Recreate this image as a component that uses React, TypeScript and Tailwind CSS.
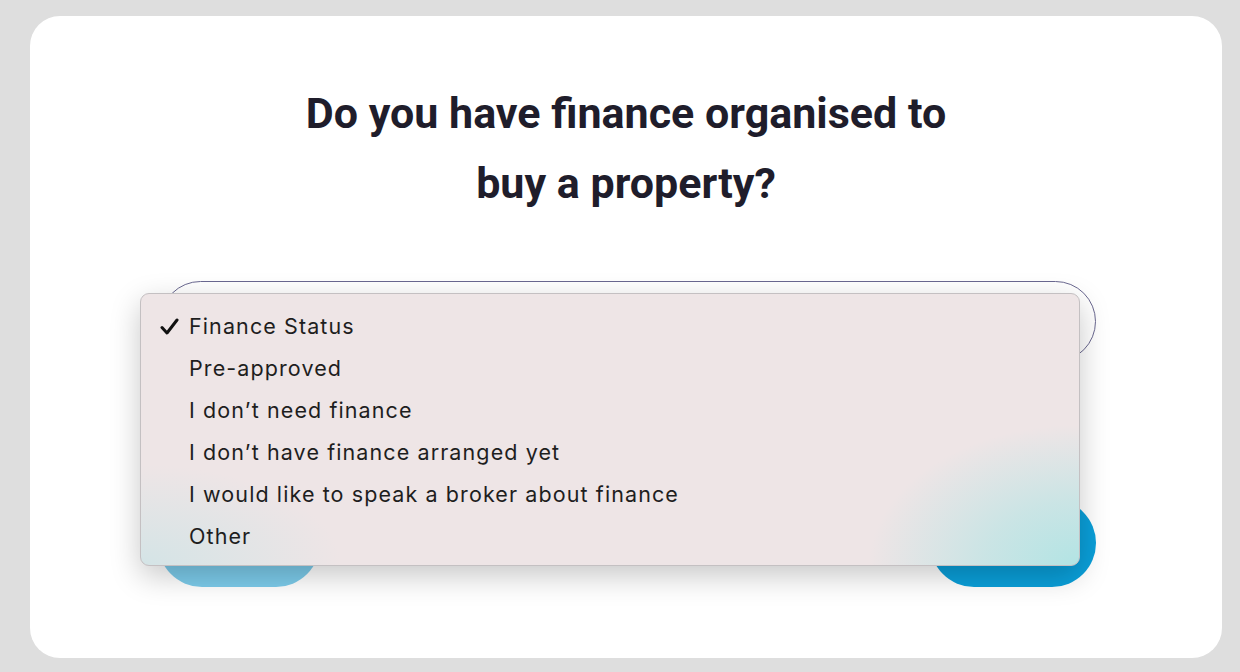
import React from "react";

const options = [
  "Finance Status",
  "Pre-approved",
  "I don’t need finance",
  "I don’t have finance arranged yet",
  "I would like to speak a broker about finance",
  "Other",
];

export default function App() {
  return (
    <div className="w-[1240px] h-[672px] bg-[#dedede] pt-[16px] pl-[30px] overflow-hidden">
      <div className="w-[1192px] h-[642px] bg-white rounded-[30px] pt-[62px] px-[128px]">
        <h1
          className="text-center text-[43px] leading-[70px] font-bold text-[#1f1d2b] tracking-[0px]"
          style={{ fontFamily: "Roboto, sans-serif" }}
        >
          Do you have finance organised to
          <br />
          buy a property?
        </h1>
        <div className="relative mt-[63px] ml-[2px] w-[936px]">
          <div className="h-[81px] rounded-full border border-[#6a6890]" />
          <div
            className="absolute left-[-20px] top-[12px] w-[940px] h-[273px] rounded-[9px] border border-[#c4c0c2] shadow-[0_10px_30px_rgba(0,0,0,0.22)] pt-[11px] overflow-hidden bg-[#eee5e6] z-10"
            style={{
              fontFamily: "Inter, 'Noto Sans', sans-serif",
              backgroundImage:
                "radial-gradient(ellipse 210px 140px at 100% 100%, rgba(178,228,228,1) 0%, rgba(178,228,228,0.6) 45%, rgba(238,229,230,0) 100%), radial-gradient(ellipse 200px 100px at 0% 100%, rgba(212,228,230,1) 0%, rgba(238,229,230,0) 100%)",
            }}
          >
            {options.map((o, i) => (
              <div key={o} className="h-[42px] flex items-center text-[21.5px] tracking-[1.1px] text-[#1e1e1e]">
                <span className="w-[48px] flex justify-end pr-[10px]">
                  {i === 0 && (
                    <svg width="19" height="17" viewBox="0 0 19 17">
                      <path d="M2 9.5 L7 15 L17 2" fill="none" stroke="#111" strokeWidth="3" strokeLinecap="round" strokeLinejoin="round" />
                    </svg>
                  )}
                </span>
                <span>{o}</span>
              </div>
            ))}
          </div>
        </div>
        <div className="mt-[137px] flex justify-between w-[938px]">
          <div className="w-[162px] h-[88px] rounded-full bg-[#7ccbea]" />
          <div className="w-[166px] h-[88px] rounded-full bg-[#0a9fd9]" />
        </div>
      </div>
    </div>
  );
}
